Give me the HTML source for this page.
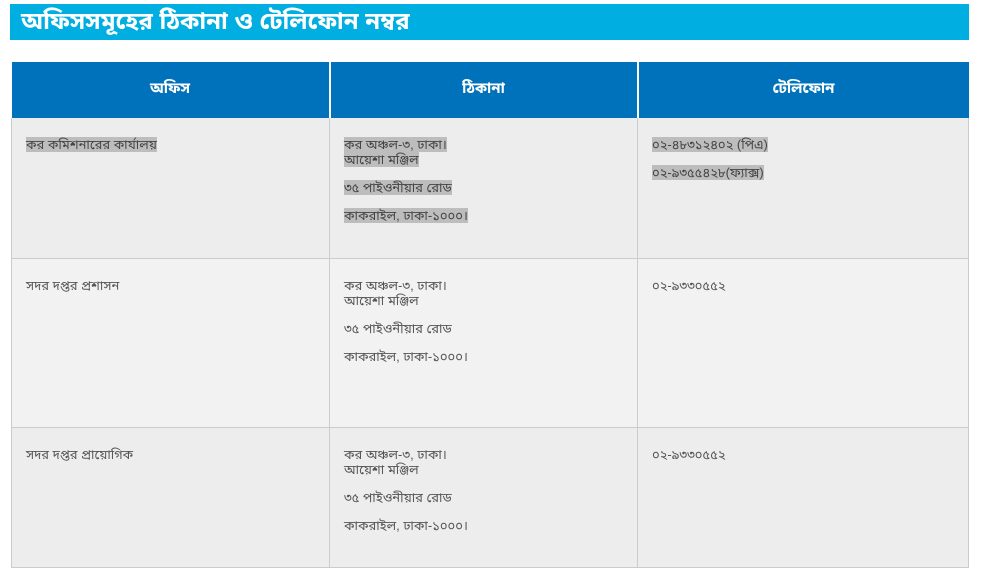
<!DOCTYPE html>
<html><head><meta charset="utf-8"><style>
body{margin:0;background:#fff;font-family:"Liberation Sans","Noto Sans Bengali","Lohit Bengali",sans-serif;width:985px;height:557px;overflow:hidden;position:relative}
.title{position:absolute;left:10px;top:4px;width:959px;height:36px;background:#00aee2;color:#fff;font-size:24px;font-weight:bold;line-height:35px;padding-left:11px;box-sizing:border-box}
table{position:absolute;left:11px;top:62px;border-collapse:collapse;width:957px;table-layout:fixed}
th{background:#0072bb;color:#fff;height:56px;font-size:15px;font-weight:bold;border-right:2px solid #fff;padding:0}
th:last-child{border-right:none}
td{vertical-align:top;border:1px solid #ccc;border-top:none;padding:19px 14px;font-size:13px;color:#555;line-height:15px}
tr.a td{background:#ededed}
tr.b td{background:#f2f2f2}
p{margin:0 0 13px}
.h{background:#bdbdbd;color:#444}
</style></head><body>
<div class="title">অফিসসমূহের ঠিকানা ও টেলিফোন নম্বর</div>
<table>
<colgroup><col style="width:318px"><col style="width:308px"><col style="width:331px"></colgroup>
<tr><th>অফিস</th><th>ঠিকানা</th><th>টেলিফোন</th></tr>
<tr class="a" style="height:140px"><td><span class="h">কর কমিশনারের কার্যালয়</span></td><td><span class="h">কর অঞ্চল-৩, ঢাকা।<br>আয়েশা মঞ্জিল</span><p></p><p><span class="h">৩৫ পাইওনীয়ার রোড</span></p><p><span class="h">কাকরাইল, ঢাকা-১০০০।</span></p></td><td><p><span class="h">০২-৪৮৩১২৪০২ (পিএ)</span></p><p><span class="h">০২-৯৩৫৫৪২৮(ফ্যাক্স)</span></p></td></tr>
<tr class="b" style="height:169px"><td>সদর দপ্তর প্রশাসন</td><td>কর অঞ্চল-৩, ঢাকা।<br>আয়েশা মঞ্জিল<p></p><p>৩৫ পাইওনীয়ার রোড</p><p>কাকরাইল, ঢাকা-১০০০।</p></td><td>০২-৯৩৩০৫৫২</td></tr>
<tr class="a" style="height:140px"><td>সদর দপ্তর প্রায়োগিক</td><td>কর অঞ্চল-৩, ঢাকা।<br>আয়েশা মঞ্জিল<p></p><p>৩৫ পাইওনীয়ার রোড</p><p>কাকরাইল, ঢাকা-১০০০।</p></td><td>০২-৯৩৩০৫৫২</td></tr>
</table>
</body></html>
